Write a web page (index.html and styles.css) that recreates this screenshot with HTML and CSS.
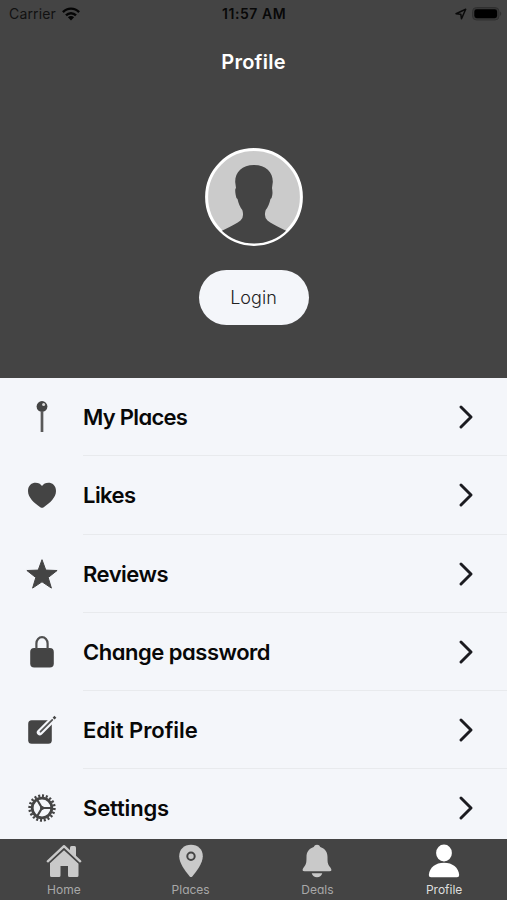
FILE: index.html
```html
<!DOCTYPE html>
<html lang="en">
<head>
<meta charset="utf-8">
<title>Profile</title>
<link rel="stylesheet" href="styles.css">
</head>
<body>
<div class="app">
  <header class="header">
    <div class="status">
      <div class="status-left"><span class="carrier">Carrier</span>
        <svg class="wifi" viewBox="0 0 18 14"><g fill="none" stroke="#050505" stroke-width="2.4"><path d="M.9 5.1C5.4.4 12.6.4 17.1 5.1"/><path d="M4 8.4c2.8-2.9 7.2-2.9 10 0"/></g><path d="M5.9 10.3c1.8-1.7 4.4-1.7 6.2 0L9 13.6z" fill="#050505"/></svg>
      </div>
      <span class="time">11:57 AM</span>
      <div class="status-right">
        <svg class="arrow" viewBox="0 0 12 12"><path d="M1 5.7 10.7 1.2 6.5 10.8 5.8 6.2z" fill="none" stroke="#0a0a0a" stroke-width="1.5" stroke-linejoin="round"/></svg>
        <svg class="battery" viewBox="0 0 30 14"><rect x=".5" y=".5" width="26.5" height="12.5" rx="4" fill="#383838" stroke="#303030"/><rect x="2.3" y="2.3" width="22.8" height="8.9" rx="2.4" fill="#000"/><path d="M28.2 4.6q2 2.2 0 4.4z" fill="#2d2d2d"/></svg>
      </div>
    </div>
    <h1 class="title">Profile</h1>
    <svg class="avatar" viewBox="0 0 98 98">
      <defs><clipPath id="disc"><circle cx="49" cy="49" r="46.5"/></clipPath></defs>
      <circle cx="49" cy="49" r="47.4" fill="#cbcbcb" stroke="#fff" stroke-width="3"/>
      <path clip-path="url(#disc)" fill="#444" d="M49 17C37 17 30 24.500 30.200 34L31 40C29.800 41 30.200 44 30.700 47Q31 50 32.500 51Q34 58 37.300 62Q39.500 69 35.500 72.500Q31 76 18.500 82L14 84V100H84V84L79.500 82Q67 76 62.500 72.500Q58.500 69 60.700 62Q64 58 65.500 51Q67 50 67.300 47Q67.800 44 67 40L67.800 34C68 24.500 61 17 49 17Z"/>
    </svg>
    <button class="login"><span>Login</span></button>
  </header>
  <main class="menu">
    <div class="row"><div class="icon"><svg viewBox="0 0 34 34"><path d="M17 12v20" stroke="#595959" stroke-width="2.700"/><circle cx="17" cy="6.500" r="5.400" fill="#444"/><circle cx="18.600" cy="4.600" r="1.500" fill="#d8d8d8"/></svg></div><div class="body"><span class="label places">My Places</span><svg class="chevron" viewBox="0 0 16 24"><path d="m3 2 10 10L3 22"/></svg></div></div>
    <div class="row"><div class="icon"><svg viewBox="0 0 34 34"><path fill="#444" d="M17 8C14 2.800 3 3.200 3 13C3 19.500 9 25 15.300 29.200Q17 30.300 18.700 29.200C25 25 31 19.500 31 13C31 3.200 20 2.800 17 8Z"/></svg></div><div class="body"><span class="label likes">Likes</span><svg class="chevron" viewBox="0 0 16 24"><path d="m3 2 10 10L3 22"/></svg></div></div>
    <div class="row"><div class="icon"><svg viewBox="0 0 34 34"><path fill="#444" stroke="#444" stroke-linejoin="round" d="m17 2.700 3.800 10.400 11.300.4-8.900 7 3.200 10.600L17 24.800l-9.400 6.300 3.200-10.600-8.900-7 11.300-.4z"/></svg></div><div class="body"><span class="label reviews">Reviews</span><svg class="chevron" viewBox="0 0 16 24"><path d="m3 2 10 10L3 22"/></svg></div></div>
    <div class="row"><div class="icon"><svg viewBox="0 0 34 34"><rect x="5.200" y="13" width="23.600" height="19.600" rx="4" fill="#444"/><path d="M11.400 14V8.500a5.600 6.300 0 0 1 11.200 0V14" fill="none" stroke="#505050" stroke-width="2.200"/></svg></div><div class="body"><span class="label password">Change password</span><svg class="chevron" viewBox="0 0 16 24"><path d="m3 2 10 10L3 22"/></svg></div></div>
    <div class="row"><div class="icon"><svg viewBox="0 0 34 34"><rect x="3.200" y="7.200" width="23.600" height="23.600" rx="3.500" fill="#444"/><path d="M14.800 19.400 28 6.200" stroke="#f4f6fa" stroke-width="6" stroke-linecap="round"/><path d="M15.500 18.700 27.300 6.900" stroke="#555" stroke-width="1.800" stroke-linecap="round"/><path d="M28.600 5.600 30.400 3.800" stroke="#444" stroke-width="2.700"/></svg></div><div class="body"><span class="label edit">Edit Profile</span><svg class="chevron" viewBox="0 0 16 24"><path d="m3 2 10 10L3 22"/></svg></div></div>
    <div class="row"><div class="icon"><svg viewBox="0 0 34 34"><g fill="none" stroke="#444"><circle cx="17" cy="17" r="12.300" stroke-width="2.800" pathLength="60" stroke-dasharray="1.600 1.400"/><circle cx="17" cy="17" r="9.800" stroke-width="2.800"/><path stroke-width="2.200" d="M17 17h9M17 17l-4.700-8M17 17l-4.700 8"/></g><circle cx="17" cy="17" r="2" fill="#444"/></svg></div><div class="body"><span class="label settings">Settings</span><svg class="chevron" viewBox="0 0 16 24"><path d="m3 2 10 10L3 22"/></svg></div></div>
  </main>
  <nav class="tabs">
    <div class="tab"><svg viewBox="0 0 36 34"><path fill="#c9c9c9" d="M18 4.200 32.500 18V31.500Q32.500 33 31 33H23.500Q22 33 22 31.500V22H14.500V31.500Q14.500 33 13 33H5.500Q4 33 4 31.500V18Z"/><path d="M1.800 18 18 3 34.200 18" fill="none" stroke="#444" stroke-width="4.800"/><path fill="#c9c9c9" d="M24 3.500q0-1.500 1.500-1.500h3Q30 2 30 3.500V13L24 7.500z"/><path d="M1.800 17.300 18 2.200 34.200 17.300" fill="none" stroke="#c9c9c9" stroke-width="2.400" stroke-linecap="round" stroke-linejoin="round"/></svg><span>Home</span></div>
    <div class="tab"><svg viewBox="0 0 36 34"><path fill="#c9c9c9" d="M18 .800C11 .800 6.200 5.500 6.200 12.200C6.200 19 12 26.500 16.500 32.200Q18 34 19.500 32.200C24 26.500 29.800 19 29.800 12.200C29.800 5.500 25 .800 18 .800Z"/><circle cx="18" cy="12.300" r="3.700" fill="none" stroke="#444" stroke-width="2"/></svg><span>Places</span></div>
    <div class="tab"><svg viewBox="0 0 36 34"><path fill="#c9c9c9" d="M18 .800Q20.500.800 21.300 3C26 4.500 28.500 8 28.500 13C28.500 19 28.800 20.500 31.200 23.200Q34 27.200 30.500 27.200H5.500Q2 27.200 4.800 23.200C7.200 20.500 7.500 19 7.500 13C7.500 8 10 4.500 14.700 3Q15.500.800 18 .800ZM12.700 29.200h10.600Q22 33.200 18 33.200T12.700 29.200Z"/></svg><span>Deals</span></div>
    <div class="tab active"><svg viewBox="0 0 36 34"><ellipse cx="18" cy="9" rx="7.900" ry="8.500" fill="#fff"/><path fill="#fff" d="M5 33.200Q2.800 33.200 2.800 31C3.500 23.500 9.500 18.800 18 18.800S32.500 23.500 33.200 31Q33.200 33.200 31 33.200Z"/></svg><span>Profile</span></div>
  </nav>
</div>
</body>
</html>
```
FILE: styles.css
```css
* { box-sizing: border-box; }
body { margin: 0; font-family: Inter, "Liberation Sans", sans-serif; font-feature-settings: "cv11"; }
svg { display: block; flex: none; }
.app { width: 507px; height: 900px; overflow: hidden; display: flex; flex-direction: column; background: #444; }
.header { height: 378px; flex: none; display: flex; flex-direction: column; align-items: center; background: #444; }
.status { width: 100%; height: 28px; padding: 0 5px 0 9px; display: grid; grid-template-columns: 213px auto 1fr; align-items: center; color: #080808; font-size: 14px; font-feature-settings: normal; }
.status-left, .status-right { display: flex; align-items: center; padding-bottom: 1px; }
.status-left { gap: 6px; }
.status-right { justify-content: flex-end; gap: 5px; }
.carrier { color: #111; letter-spacing: .15px; }
.wifi { width: 18px; height: 14px; }
.time { font-weight: 600; letter-spacing: .55px; line-height: 17px; padding-bottom: 1px; }
.arrow { width: 12px; height: 12px; }
.battery { width: 30px; height: 14px; }
.title { margin: 20px 0 0; height: 28px; line-height: 28px; color: #fff; font-size: 20px; font-weight: 600; letter-spacing: .25px; }
.avatar { width: 98px; height: 98px; margin-top: 71.500px; }
.login { width: 110px; height: 55px; margin-top: 24px; padding: 1px 0 0; border: 0; border-radius: 28px; background: #f4f6fa; color: #222; font: 300 18px Inter, sans-serif; letter-spacing: .05px; }
.menu { height: 460.500px; flex: none; overflow: hidden; background: #f4f6fa; }
.row { height: 78.250px; display: flex; }
.icon { width: 83px; padding-left: 25px; display: flex; align-items: center; }
.icon svg { width: 34px; height: 34px; }
.body { flex: 1; display: flex; align-items: center; justify-content: space-between; padding: 1px 33px 0 0; border-bottom: 1px solid #e8eaed; }
.label { color: #080808; font-size: 22px; font-weight: 600; line-height: 30px; white-space: nowrap; }
.places { letter-spacing: -.7px; }
.likes { letter-spacing: -.55px; }
.reviews { letter-spacing: -.5px; }
.password { letter-spacing: -.48px; }
.edit { letter-spacing: -.03px; }
.settings { letter-spacing: -.15px; }
.chevron { width: 16px; height: 24px; fill: none; stroke: #1b1b20; stroke-width: 2.900; stroke-linecap: round; stroke-linejoin: round; }
.tabs { flex: 1; display: grid; grid-template-columns: repeat(4, 1fr); background: #444; }
.tab { padding: 5.500px 0 0 1px; display: flex; flex-direction: column; align-items: center; color: #a8a8a8; font-size: 12px; line-height: 16px; }
.tab svg { width: 36px; height: 34px; margin-bottom: 4px; }
.active { color: #dedede; }
```
